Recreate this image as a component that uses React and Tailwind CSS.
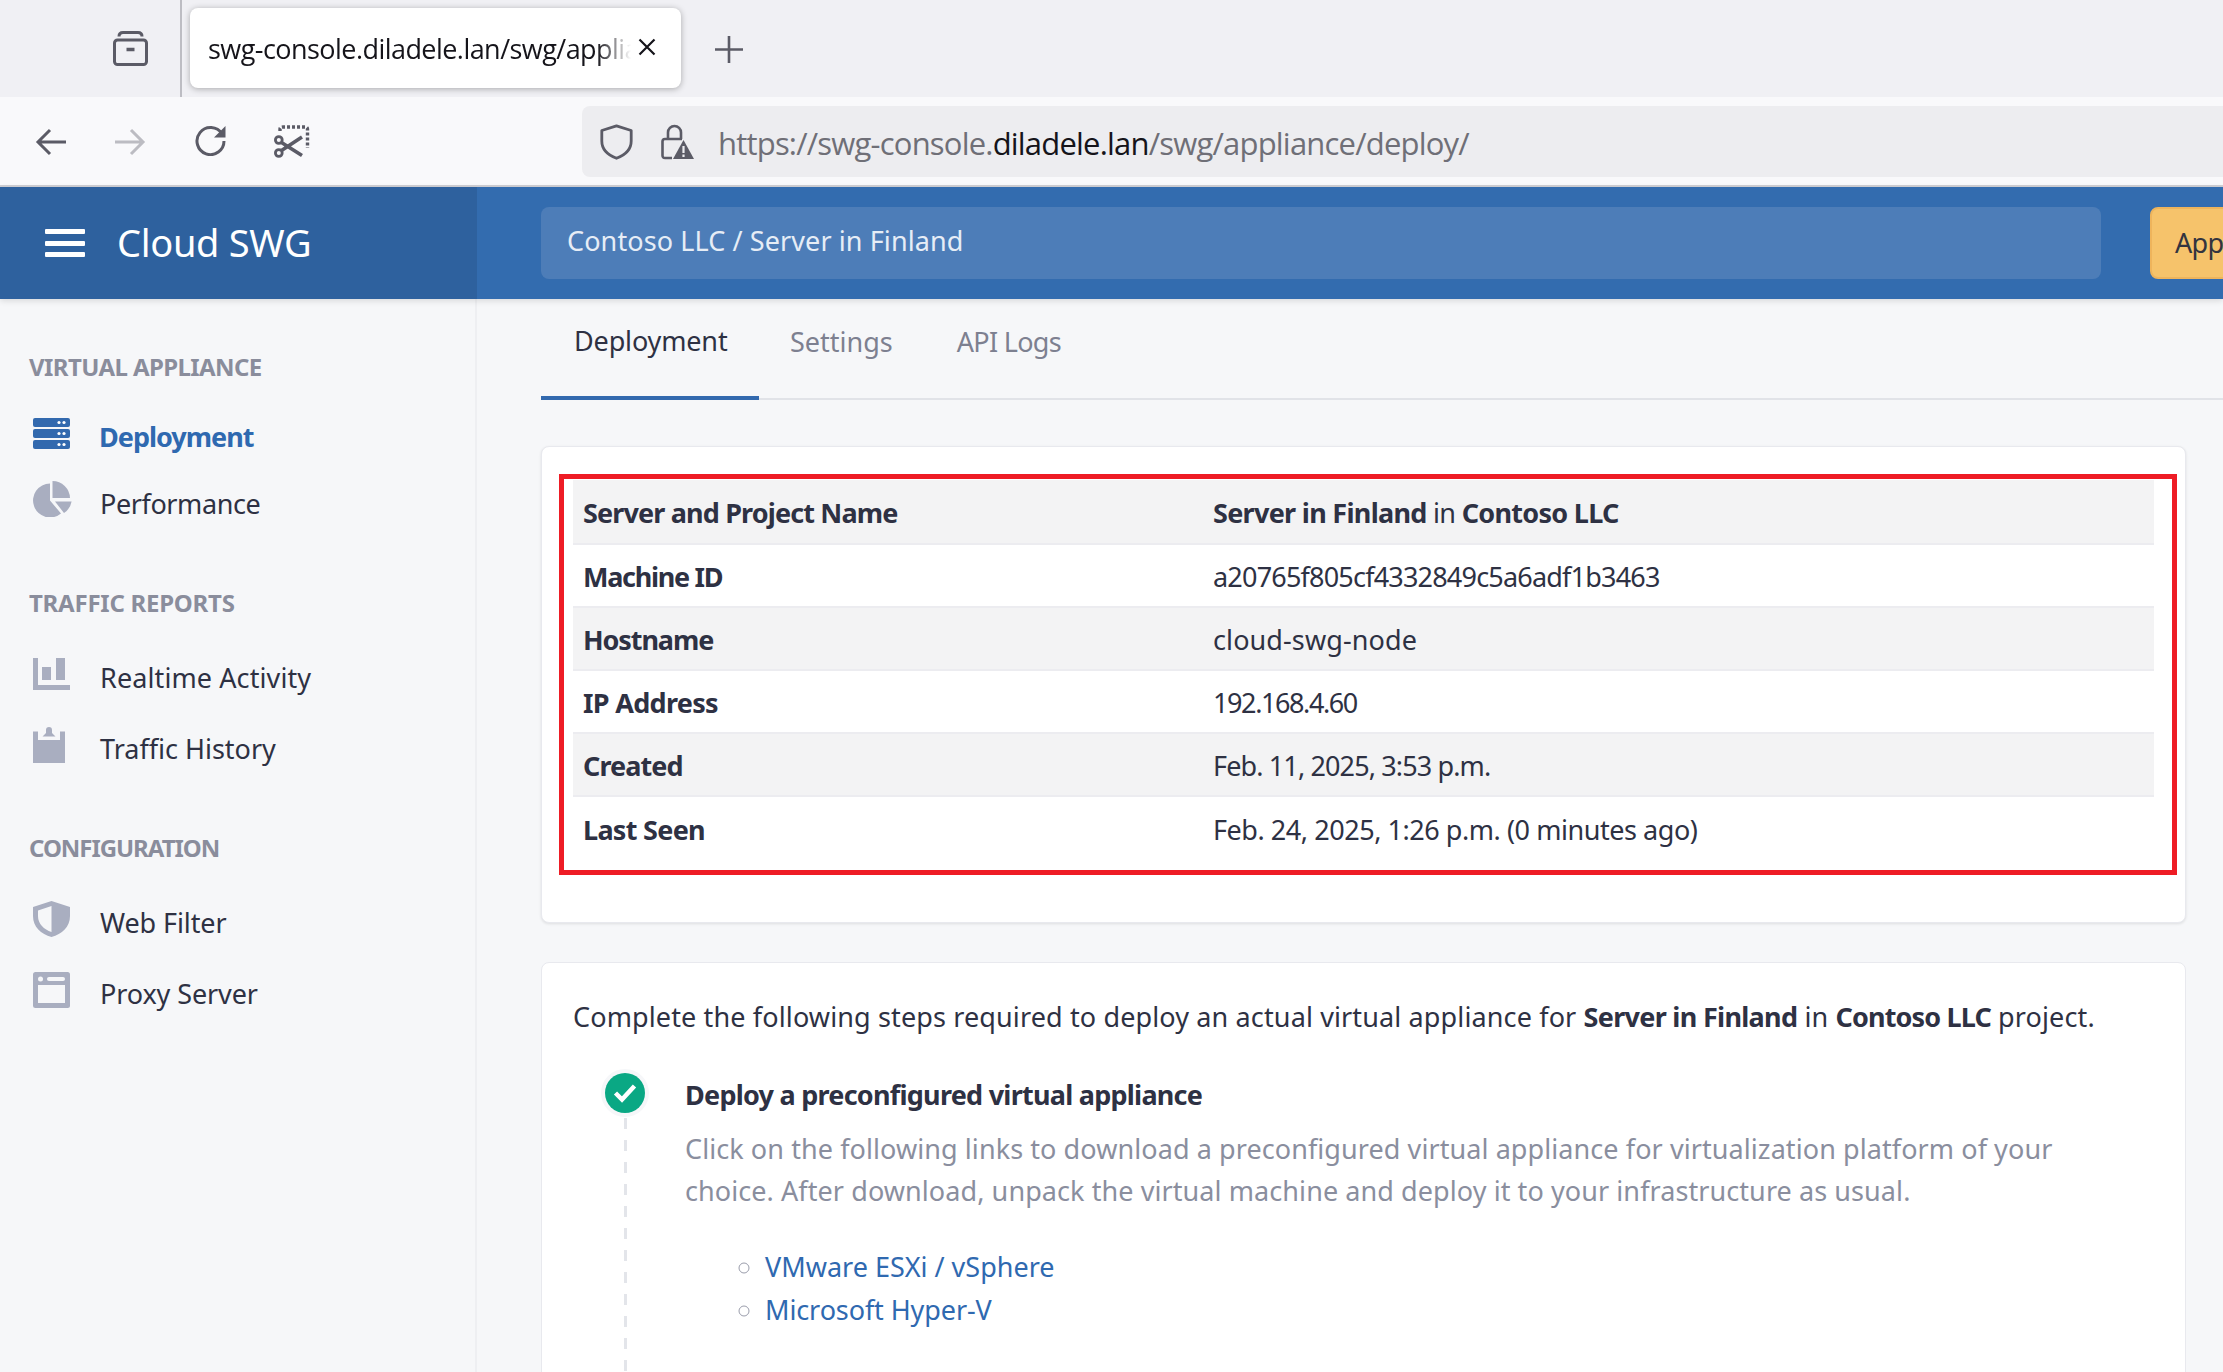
import React from 'react';

const Server = () => (
  <svg width="37" height="31" viewBox="0 0 37 31" fill="#3269ae">
    <rect width="37" height="9" y="0" rx="2" />
    <rect width="37" height="9" y="11" rx="2" />
    <rect width="37" height="9" y="22" rx="2" />
    {[4.5, 15.5, 26.5].map((y) => (
      <g key={y} fill="#fff">
        <circle cx="26" cy={y} r="1.6" />
        <circle cx="31" cy={y} r="1.6" />
      </g>
    ))}
  </svg>
);
const Pie = () => (
  <svg width="39" height="36" viewBox="0 0 39 36" fill="#a9aec0">
    <path d="M17 2.5A17 17 0 1 0 28 32.5L17 19.5Z" />
    <path d="M19.5 0A17.5 17.5 0 0 1 37 17H19.5Z" />
    <path d="M38.6 20.5A17 17 0 0 1 31 32L22 20.5Z" />
  </svg>
);
const Bars = () => (
  <svg width="37" height="32" viewBox="0 0 37 32" fill="#a9aec0">
    <path d="M0 0H5V27H37V32H0Z" />
    <rect x="9" y="9" width="9" height="13" />
    <rect x="23" y="0" width="9" height="22" />
  </svg>
);
const Clip = () => (
  <svg width="32" height="36" viewBox="0 0 32 36" fill="#a9aec0">
    <path d="M0 4.5H5V13H27V4.5H32V36H0Z" />
    <path d="M9.5 9.5L13 6V3a3 3 0 0 1 6 0V6L22.5 9.5Z" />
  </svg>
);
const ShieldHalf = () => (
  <svg width="37" height="36" viewBox="0 0 37 36" fill="#a9aec0">
    <path fillRule="evenodd" d="M18.5 0L37 6V15C37 26 29 33 18.5 36C8 33 0 26 0 15V6ZM18.5 5L5 9.5V15C5 23 11 28.5 18.5 31Z" />
  </svg>
);
const Win = () => (
  <svg width="37" height="36" viewBox="0 0 37 36">
    <rect width="37" height="36" rx="2.5" fill="#a9aec0" />
    <rect x="5" y="13" width="27" height="18" fill="#f6f7f9" />
    <circle cx="7.5" cy="7" r="2.5" fill="#f6f7f9" />
    <rect x="14" y="5" width="18" height="4" rx="2" fill="#f6f7f9" />
  </svg>
);

const Item = ({ icon, label, active, tall, tk }) => (
  <div className={`flex items-center ${tall ? 'h-[71px]' : 'h-[66px]'} pl-[33px]`}>
    <div className="w-[67px] -mt-[8px] flex shrink-0">{icon}</div>
    <span className={`${tk} ${active ? 'font-bold text-[#2f69b0]' : 'text-[#2e3143]'}`}>{label}</span>
  </div>
);
const Head = ({ children, cls }) => (
  <div className={`h-[56px] flex items-center pl-[29px] text-[24px] font-bold text-[#8a8d9c] ${cls}`}>{children}</div>
);

const Row = ({ k, children, odd, first, kt, vt }) => (
  <tr className={`${odd ? 'bg-[#f3f3f4]' : 'bg-white'} ${first ? 'h-[64px]' : 'h-[63px]'}`}>
    <td className={`pl-[10px] pt-[4px] font-bold ${kt} ${first ? '' : 'border-t-2 border-[#ececf0]'}`}>{k}</td>
    <td className={`pl-[10px] pt-[4px] ${vt} ${first ? '' : 'border-t-2 border-[#ececf0]'}`}>{children}</td>
  </tr>
);

export default function App() {
  return (
    <div className="w-[2223px] h-[1372px] overflow-hidden bg-[#f6f7f9] text-[27px] tracking-[-0.7px] text-[#2e3143] font-['Noto_Sans',sans-serif]">
      {/* browser tab strip */}
      <div className="h-[97px] bg-[#f0f0f4] flex font-['Open_Sans',sans-serif]">
        <div className="w-[180px] pl-[113px] pt-[31px] shrink-0">
          <svg width="35" height="35" viewBox="0 0 35 35" fill="none" stroke="#5b5b66" strokeWidth="3">
            <rect x="1.5" y="9" width="32" height="24.5" rx="3" />
            <path d="M6 5.5C6 3 7.5 1.5 10 1.5H25C27.5 1.5 29 3 29 5.5" />
            <path d="M13.5 18.5H21.5" strokeWidth="3.5" />
          </svg>
        </div>
        <div className="w-[2px] bg-[#bdbdc3] h-full shrink-0" />
        <div className="ml-[8px] mt-[8px] w-[491px] h-[80px] bg-white rounded-lg shadow-[0_1px_6px_rgba(0,0,0,0.3)] flex items-center pl-[18px] shrink-0">
          <div className="w-[423px] pt-[2px] overflow-hidden whitespace-nowrap text-[27px] tracking-[-0.55px] text-[#15141a] [mask-image:linear-gradient(to_right,black_92%,transparent)]">
            swg-console.diladele.lan/swg/appliance/deploy/
          </div>
          <svg className="ml-[7px] -mt-[2px]" width="18" height="18" viewBox="0 0 18 18" stroke="#15141a" strokeWidth="2.2" fill="none">
            <path d="M1.5 1.5L16.5 16.5M16.5 1.5L1.5 16.5" />
          </svg>
        </div>
        <svg className="ml-[34px] mt-[36px]" width="28" height="28" viewBox="0 0 28 28" stroke="#5b5b66" strokeWidth="2.6" fill="none">
          <path d="M14 0V27M0 13.5H28" />
        </svg>
      </div>
      {/* browser toolbar */}
      <div className="h-[90px] bg-[#f9f9fb] border-b-2 border-[#cfcfd4] flex items-start font-['Open_Sans',sans-serif]">
        <svg className="ml-[35px] mt-[31px]" width="31" height="28" viewBox="0 0 31 28" fill="none" stroke="#5b5b66" strokeWidth="3">
          <path d="M31 14H3M15 2L3 14L15 26" />
        </svg>
        <svg className="ml-[49px] mt-[31px]" width="31" height="28" viewBox="0 0 31 28" fill="none" stroke="#bcbcc2" strokeWidth="3">
          <path d="M0 14H28M16 2L28 14L16 26" />
        </svg>
        <svg className="ml-[49px] mt-[29px]" width="32" height="30" viewBox="0 0 32 30" fill="none">
          <path d="M27 8A13.5 13.5 0 1 0 29 15" stroke="#5b5b66" strokeWidth="3" />
          <path d="M30.5 0V11.5H19Z" fill="#5b5b66" />
        </svg>
        <svg className="ml-[47px] mt-[28px]" width="36" height="33" viewBox="0 0 36 33" fill="none">
          <path d="M6 6V4Q6 2 9 2H31Q33.5 2 33.5 4V23" stroke="#5b5b66" strokeWidth="3.4" strokeDasharray="3 2" />
          <circle cx="4.8" cy="15" r="3.4" stroke="#5b5b66" strokeWidth="2.8" />
          <circle cx="4.8" cy="28" r="3.4" stroke="#5b5b66" strokeWidth="2.8" />
          <path d="M7.5 17.5L28 30.5M7.5 25.5L28 12" stroke="#5b5b66" strokeWidth="3.6" />
        </svg>
        <div className="ml-[272px] mt-[9px] h-[71px] flex-1 bg-[#ededf0] rounded-l-lg flex items-center whitespace-nowrap">
          <svg className="ml-[18px] shrink-0" width="33" height="36" viewBox="0 0 33 36" fill="none" stroke="#5b5b66" strokeWidth="2.8">
            <path d="M16.5 1.8L31.2 6.5V17C31.2 26 24 31.5 16.5 34.3C9 31.5 1.8 26 1.8 17V6.5Z" strokeLinejoin="round" />
          </svg>
          <svg className="ml-[28px] shrink-0" width="33" height="36" viewBox="0 0 33 36" fill="none">
            <path d="M7 15V8.5a6.5 6.5 0 0 1 13 0V15" stroke="#5b5b66" strokeWidth="2.6" />
            <path d="M11 34H4Q1.5 34 1.5 31.5V17.5Q1.5 15 4 15H21" stroke="#5b5b66" strokeWidth="2.6" />
            <path d="M22.5 16L33 35H12Z" fill="#5b5b66" />
            <path d="M22.5 22V29M22.5 30.5V33" stroke="#ededf0" strokeWidth="2.2" />
          </svg>
          <span className="ml-[24px] pt-[3px] text-[31px] tracking-[-0.8px] text-[#6f6f77]">
            https://swg-console.<span className="text-[#15141a]">diladele.lan</span>/swg/appliance/deploy/
          </span>
        </div>
      </div>
      {/* app header */}
      <div className="h-[112px] flex shadow-[0_2px_6px_rgba(0,0,0,0.12)] relative bg-[#336caf]">
        <div className="w-[477px] bg-[#2e619e] flex items-center shrink-0">
          <div className="ml-[45px] w-[40px] flex flex-col gap-[6.5px]">
            <div className="h-[5px] bg-white rounded-[1px]" />
            <div className="h-[5px] bg-white rounded-[1px]" />
            <div className="h-[5px] bg-white rounded-[1px]" />
          </div>
          <span className="ml-[32px] pb-[2px] text-white text-[38px] tracking-[-0.3px]">Cloud SWG</span>
        </div>
        <div className="flex items-center flex-1 min-w-0 pl-[64px]">
          <div className="w-[1560px] h-[72px] bg-[#4d7db8] rounded-lg flex items-center pl-[26px] pb-[3px] tracking-[0.1px] text-[#e6edf6] shrink-0">Contoso LLC / Server in Finland</div>
          <div className="ml-[49px] h-[72px] w-[160px] bg-[#f6c36b] border-2 border-[#eeb45c] rounded-lg flex items-center pl-[23px] text-[#33343f] shrink-0">Apply</div>
        </div>
      </div>
      <div className="flex">
        {/* sidebar */}
        <aside className="w-[477px] h-[1073px] pt-[40px] border-r-2 border-[#eeeff2] shrink-0">
          <Head cls="tracking-[-0.6px]">VIRTUAL APPLIANCE</Head>
          <div className="mt-[9px]">
            <Item icon={<Server />} label="Deployment" active tk="tracking-[-1px] -ml-[1px]" />
            <Item icon={<Pie />} label="Performance" tk="tracking-[-0.4px] pt-[2px]" />
          </div>
          <Head cls="mt-[39px] tracking-[-0.25px]">TRAFFIC REPORTS</Head>
          <div className="mt-[11px]">
            <Item tall icon={<Bars />} label="Realtime Activity" tk="tracking-[0.1px] pt-[1px]" />
            <Item tall icon={<Clip />} label="Traffic History" tk="tracking-[0px] pt-[1px]" />
          </div>
          <Head cls="mt-[36px] tracking-[-1.05px]">CONFIGURATION</Head>
          <div className="mt-[11px]">
            <Item tall icon={<ShieldHalf />} label="Web Filter" tk="tracking-[-0.1px] pt-[2px]" />
            <Item tall icon={<Win />} label="Proxy Server" tk="tracking-[-0.1px] pt-[2px]" />
          </div>
        </aside>
        {/* main */}
        <main className="pl-[64px] flex-1 min-w-0">
          <div className="h-[101px] border-b-2 border-[#e1e3e8] flex">
            <div className="w-[218px] h-[101px] border-b-4 border-[#3269ae] pl-[33px] flex items-center pb-[13px] tracking-[-0.15px] text-[#2e3143]">Deployment</div>
            <div className="pl-[31px] flex items-center pb-[13px] tracking-[0px] text-[#7d8090]">Settings</div>
            <div className="pl-[64px] flex items-center pb-[13px] text-[#7d8090]">API Logs</div>
          </div>
          <section className="mt-[46px] w-[1645px] h-[477px] bg-white rounded-lg border border-[#e8e9ee] shadow-[0_1px_3px_rgba(0,0,0,0.1)] pl-[17px] pr-[8px] pt-[27px]">
            <div className="border-[5px] border-[#ee1c25] pt-px pl-[9px] pr-[18px] h-[401px]">
              <table className="w-full table-fixed border-collapse">
                <colgroup>
                  <col className="w-[630px]" />
                  <col />
                </colgroup>
                <tbody>
                  <Row k="Server and Project Name" odd first kt="tracking-[-0.85px]" vt="tracking-[-0.7px]">
                    <b>Server in Finland</b> in <b>Contoso LLC</b>
                  </Row>
                  <Row k="Machine ID" kt="tracking-[-1.3px]" vt="tracking-[-0.8px]">a20765f805cf4332849c5a6adf1b3463</Row>
                  <Row k="Hostname" odd kt="tracking-[-1.1px]" vt="tracking-[0.1px]">cloud-swg-node</Row>
                  <Row k="IP Address" kt="tracking-[-0.7px]" vt="tracking-[-1.4px]">192.168.4.60</Row>
                  <Row k="Created" odd kt="tracking-[-0.9px]" vt="tracking-[-0.87px]">Feb. 11, 2025, 3:53 p.m.</Row>
                  <Row k="Last Seen" kt="tracking-[-0.7px]" vt="tracking-[-0.45px]">Feb. 24, 2025, 1:26 p.m. (0 minutes ago)</Row>
                </tbody>
              </table>
            </div>
          </section>
          <section className="mt-[39px] w-[1645px] h-[500px] bg-white rounded-t-lg border border-[#e8e9ee] pl-[31px] pt-[33px]">
            <p className="leading-[42px] tracking-[0.13px]">
              Complete the following steps required to deploy an actual virtual appliance for <b className="tracking-[-0.7px]">Server in Finland</b> in <b className="tracking-[-0.85px]">Contoso LLC</b> project.
            </p>
            <div className="flex mt-[35px]">
              <div className="w-[40px] ml-[32px] shrink-0 flex flex-col items-center">
                <div className="w-[40px] h-[40px] rounded-full bg-[#0aa884] ring-4 ring-[#f6f7f9] flex items-center justify-center shrink-0">
                  <svg width="24" height="20" viewBox="0 0 24 20" fill="none" stroke="#fff" strokeWidth="4.5">
                    <path d="M2.5 10L9 16.5L21.5 3" />
                  </svg>
                </div>
                <div className="mt-[5px] w-[3px] h-[300px] bg-[repeating-linear-gradient(to_bottom,#e3e5ea_0_11px,transparent_11px_22px)]" />
              </div>
              <div className="ml-[40px] flex-1">
                <div className="font-bold leading-[44px] tracking-[-0.75px]">Deploy a preconfigured virtual appliance</div>
                <p className="mt-[11px] leading-[42px] tracking-[0.08px] text-[#8a8e9e] w-[1400px]">
                  Click on the following links to download a preconfigured virtual appliance for virtualization platform of your choice. After download, unpack the virtual machine and deploy it to your infrastructure as usual.
                </p>
                <ul className="mt-[33px] pl-[80px] list-[circle] marker:text-[#9a9dab] text-[#2f69b0] leading-[43px]">
                  <li className="tracking-[0px]">VMware ESXi / vSphere</li>
                  <li className="tracking-[-0.1px]">Microsoft Hyper-V</li>
                </ul>
              </div>
            </div>
          </section>
        </main>
      </div>
    </div>
  );
}
